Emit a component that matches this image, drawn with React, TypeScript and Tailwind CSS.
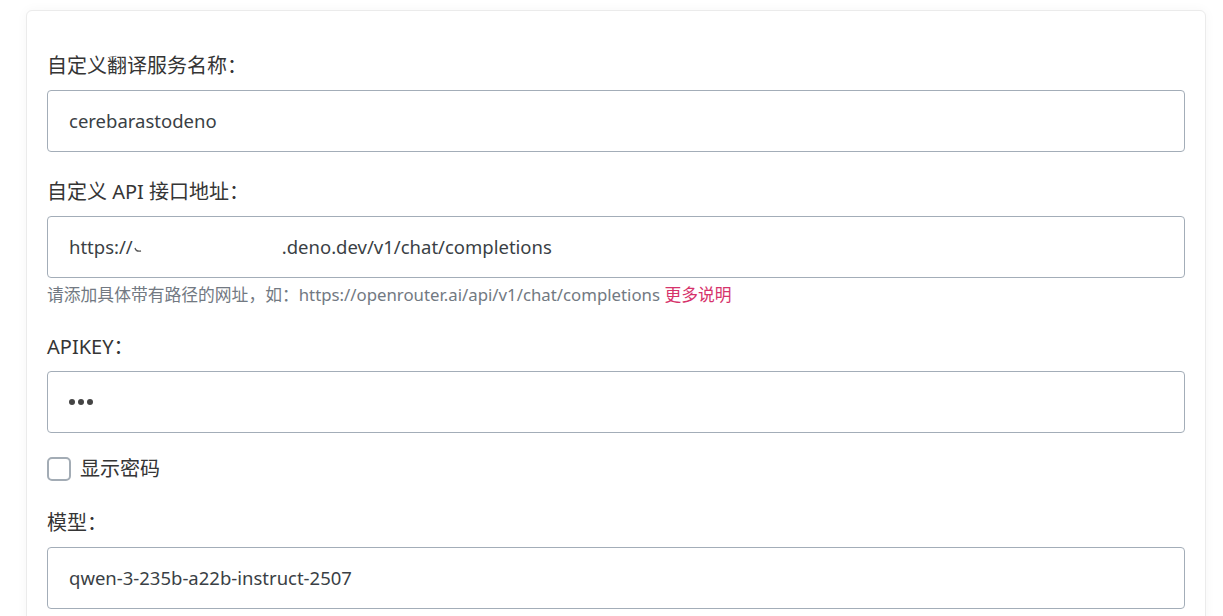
import React from "react";

const font = { fontFamily: '"Noto Sans", "Noto Sans CJK SC", sans-serif' };

function Label({ children }: { children: React.ReactNode }) {
  return <div className="text-[20px] leading-[26px] text-[#353535] mb-[11px]">{children}</div>;
}

function Input({ value }: { value: React.ReactNode }) {
  return (
    <div className="h-[62px] border border-[#a3adb8] rounded-[4px] flex items-center pl-[21px] text-[18.5px] text-[#3a3f45] bg-white">
      {value}
    </div>
  );
}

export default function App() {
  return (
    <div className="bg-white min-h-[616px] pt-[10px] pl-[26px] pr-[17px] overflow-hidden" style={font}>
      <div className="border border-[#ebebeb] rounded-[6px] bg-white px-[20px] pt-[42px] pb-[20px] shadow-[0_0_12px_rgba(0,0,0,0.04)]">
        <Label>自定义翻译服务名称：</Label>
        <Input value="cerebarastodeno" />

        <div className="mt-[27px]">
          <Label>自定义 API 接口地址：</Label>
          <Input
            value={
              <span className="flex items-center">
                <span>https://</span>
                <svg width="8" height="8" viewBox="0 0 8 8" className="mt-[6px] ml-[1px]">
                  <path d="M1 2 Q2 6 7 5" stroke="#555" strokeWidth="1.3" fill="none" />
                </svg>
                <span className="inline-block w-[140px]"></span>
                <span>.deno.dev/v1/chat/completions</span>
              </span>
            }
          />
          <div className="mt-[5px] text-[16.8px] leading-[24px] text-[#727982]">
            请添加具体带有路径的网址，如：https://openrouter.ai/api/v1/chat/completions{" "}
            <span className="text-[#d6336c]">更多说明</span>
          </div>
        </div>

        <div className="mt-[27px]">
          <Label>APIKEY：</Label>
          <Input
            value={
              <span className="flex gap-[3px]">
                <span className="w-[6px] h-[6px] rounded-full bg-[#444]"></span>
                <span className="w-[6px] h-[6px] rounded-full bg-[#444]"></span>
                <span className="w-[6px] h-[6px] rounded-full bg-[#444]"></span>
              </span>
            }
          />
        </div>

        <div className="mt-[23px] flex items-center h-[26px] gap-[9px]">
          <span className="w-[24px] h-[24px] rounded-[5px] border-2 border-[#a3acb5] bg-white"></span>
          <span className="text-[20px] text-[#353535]">显示密码</span>
        </div>

        <div className="mt-[28px]">
          <Label>模型：</Label>
          <Input value="qwen-3-235b-a22b-instruct-2507" />
        </div>
      </div>
    </div>
  );
}
